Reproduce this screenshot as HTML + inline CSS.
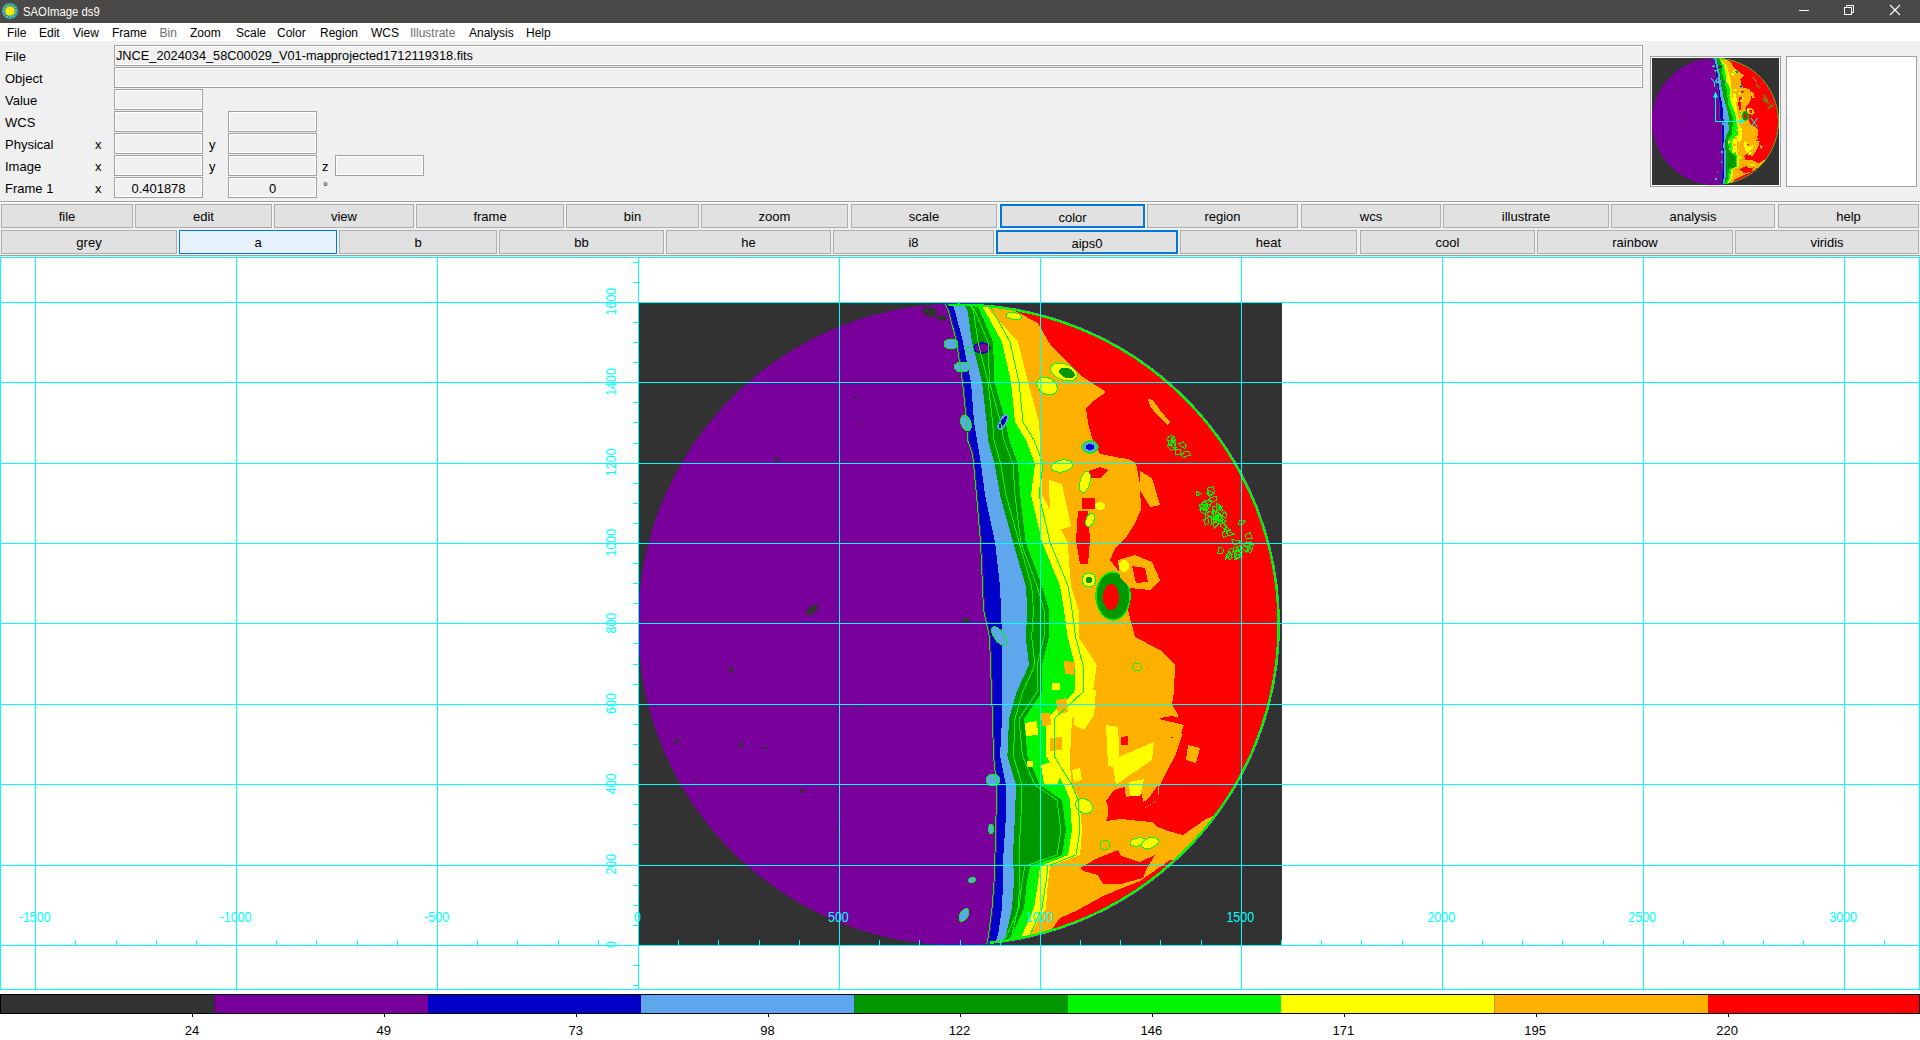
<!DOCTYPE html><html><head><meta charset="utf-8"><style>
html,body{margin:0;padding:0;width:1920px;height:1040px;overflow:hidden;background:#fff;font-family:"Liberation Sans",sans-serif;}
.a{position:absolute;}
.t{position:absolute;white-space:nowrap;color:#000;font-size:13px;line-height:15px;}
.m{position:absolute;white-space:nowrap;color:#000;font-size:12px;line-height:14px;}
.e{position:absolute;box-sizing:border-box;border:1px solid #a0a0a0;background:#f0f0f0;box-shadow:inset 0 0 0 1px #fff;}
.b{position:absolute;box-sizing:border-box;border:1px solid #adadad;background:#e1e1e1;text-align:center;font-size:13px;color:#000;}
.b span{position:absolute;left:0;right:0;top:4px;line-height:15px;}
</style></head><body>
<div class="a" style="left:0;top:0;width:1920px;height:23px;background:#4a4947;"></div>
<svg class="a" style="left:0;top:0" width="24" height="23"><circle cx="10" cy="11" r="8" fill="#3fb0b0"/><circle cx="10" cy="11" r="6.6" fill="#9ccc3a"/><line x1="14.20" y1="11.00" x2="17.34" y2="12.95" stroke="#1a86c8" stroke-width="1.3"/><line x1="13.64" y1="13.10" x2="15.38" y2="16.36" stroke="#1a86c8" stroke-width="1.3"/><line x1="12.10" y1="14.64" x2="11.98" y2="18.34" stroke="#1a86c8" stroke-width="1.3"/><line x1="10.00" y1="15.20" x2="8.05" y2="18.34" stroke="#1a86c8" stroke-width="1.3"/><line x1="7.90" y1="14.64" x2="4.64" y2="16.38" stroke="#1a86c8" stroke-width="1.3"/><line x1="6.36" y1="13.10" x2="2.66" y2="12.98" stroke="#1a86c8" stroke-width="1.3"/><line x1="5.80" y1="11.00" x2="2.66" y2="9.05" stroke="#1a86c8" stroke-width="1.3"/><line x1="6.36" y1="8.90" x2="4.62" y2="5.64" stroke="#1a86c8" stroke-width="1.3"/><line x1="7.90" y1="7.36" x2="8.02" y2="3.66" stroke="#1a86c8" stroke-width="1.3"/><line x1="10.00" y1="6.80" x2="11.95" y2="3.66" stroke="#1a86c8" stroke-width="1.3"/><line x1="12.10" y1="7.36" x2="15.36" y2="5.62" stroke="#1a86c8" stroke-width="1.3"/><line x1="13.64" y1="8.90" x2="17.34" y2="9.02" stroke="#1a86c8" stroke-width="1.3"/><circle cx="10" cy="11" r="4.6" fill="#fbe800"/></svg>
<div class="m" style="left:23px;top:5px;color:#fff;font-size:12.5px;transform-origin:0 0;transform:scaleX(0.905);">SAOImage ds9</div>
<svg class="a" style="left:1780px;top:0" width="140" height="23"><line x1="1799" y1="10.5" x2="1809" y2="10.5" stroke="#fff" stroke-width="1" transform="translate(-1780,0)"/><rect x="1844.5" y="7.5" width="7" height="7" fill="none" stroke="#fff" transform="translate(-1780,0)"/><path d="M1846.5 7.5 V5.5 H1853.5 V12.5 H1851.5" fill="none" stroke="#fff" transform="translate(-1780,0)"/><path d="M1890 5 L1900 15 M1900 5 L1890 15" stroke="#fff" stroke-width="1.1" transform="translate(-1780,0)"/></svg>
<div class="a" style="left:0;top:23px;width:1920px;height:18px;background:#fff;"></div>
<div class="m" style="left:7px;top:26px;color:#000">File</div>
<div class="m" style="left:39px;top:26px;color:#000">Edit</div>
<div class="m" style="left:73px;top:26px;color:#000">View</div>
<div class="m" style="left:112px;top:26px;color:#000">Frame</div>
<div class="m" style="left:159.5px;top:26px;color:#6d6d6d">Bin</div>
<div class="m" style="left:190px;top:26px;color:#000">Zoom</div>
<div class="m" style="left:236px;top:26px;color:#000">Scale</div>
<div class="m" style="left:277px;top:26px;color:#000">Color</div>
<div class="m" style="left:320px;top:26px;color:#000">Region</div>
<div class="m" style="left:371px;top:26px;color:#000">WCS</div>
<div class="m" style="left:410px;top:26px;color:#6d6d6d">Illustrate</div>
<div class="m" style="left:469px;top:26px;color:#000">Analysis</div>
<div class="m" style="left:526px;top:26px;color:#000">Help</div>
<div class="a" style="left:0;top:41px;width:1920px;height:160px;background:#f0f0f0;"></div>
<div class="a" style="left:0;top:201px;width:1920px;height:1px;background:#a0a0a0;"></div>
<div class="a" style="left:0;top:202px;width:1920px;height:1px;background:#fdfdfd;"></div>
<div class="a" style="left:0;top:203px;width:1920px;height:52px;background:#f0f0f0;"></div>
<div class="a" style="left:0;top:255px;width:1920px;height:1px;background:#a0a0a0;"></div>
<div class="t" style="left:5px;top:49px">File</div>
<div class="t" style="left:5px;top:71px">Object</div>
<div class="t" style="left:5px;top:93px">Value</div>
<div class="t" style="left:5px;top:115px">WCS</div>
<div class="t" style="left:5px;top:137px">Physical</div>
<div class="t" style="left:5px;top:159px">Image</div>
<div class="t" style="left:5px;top:181px">Frame 1</div>
<div class="e" style="left:114px;top:45px;width:1529px;height:21px;"></div>
<div class="t" style="left:116px;top:48px;font-size:13.4px;transform-origin:0 0;transform:scaleX(0.952)">JNCE_2024034_58C00029_V01-mapprojected1712119318.fits</div>
<div class="e" style="left:114px;top:67px;width:1529px;height:21px;"></div>
<div class="e" style="left:114px;top:89px;width:89px;height:21px;"></div>
<div class="e" style="left:114px;top:111px;width:89px;height:21px;"></div>
<div class="e" style="left:228px;top:111px;width:89px;height:21px;"></div>
<div class="e" style="left:114px;top:133px;width:89px;height:21px;"></div>
<div class="e" style="left:228px;top:133px;width:89px;height:21px;"></div>
<div class="e" style="left:114px;top:155px;width:89px;height:21px;"></div>
<div class="e" style="left:228px;top:155px;width:89px;height:21px;"></div>
<div class="e" style="left:335px;top:155px;width:89px;height:21px;"></div>
<div class="e" style="left:114px;top:177px;width:89px;height:21px;"></div>
<div class="t" style="left:114px;width:89px;text-align:center;top:181px;font-size:13.6px;transform:scaleX(0.955)">0.401878</div>
<div class="e" style="left:228px;top:177px;width:89px;height:21px;"></div>
<div class="t" style="left:228px;width:89px;text-align:center;top:181px;font-size:13.6px;transform:scaleX(0.955)">0</div>
<div class="t" style="left:95px;top:137px">x</div>
<div class="t" style="left:95px;top:159px">x</div>
<div class="t" style="left:95px;top:181px">x</div>
<div class="t" style="left:209px;top:137px">y</div>
<div class="t" style="left:209px;top:159px">y</div>
<div class="t" style="left:322px;top:159px">z</div>
<div class="t" style="left:323px;top:180px;font-size:12px">°</div>
<div class="a" style="left:1650px;top:56px;width:129px;height:129px;border:1px solid #a0a0a0;background:#fff;"></div>
<div class="a" style="left:1786px;top:56px;width:129px;height:129px;border:1px solid #a0a0a0;background:#fff;"></div>
<div class="b" style="left:1px;top:204px;width:132px;height:24px;"><span>file</span></div>
<div class="b" style="left:135px;top:204px;width:137px;height:24px;"><span>edit</span></div>
<div class="b" style="left:274px;top:204px;width:140px;height:24px;"><span>view</span></div>
<div class="b" style="left:416px;top:204px;width:148px;height:24px;"><span>frame</span></div>
<div class="b" style="left:566px;top:204px;width:133px;height:24px;"><span>bin</span></div>
<div class="b" style="left:701px;top:204px;width:147px;height:24px;"><span>zoom</span></div>
<div class="b" style="left:851px;top:204px;width:146px;height:24px;"><span>scale</span></div>
<div class="b" style="left:1000px;top:204px;width:145px;height:24px;border:2px solid #0078d7;"><span>color</span></div>
<div class="b" style="left:1147px;top:204px;width:151px;height:24px;"><span>region</span></div>
<div class="b" style="left:1301px;top:204px;width:140px;height:24px;"><span>wcs</span></div>
<div class="b" style="left:1443px;top:204px;width:166px;height:24px;"><span>illustrate</span></div>
<div class="b" style="left:1611px;top:204px;width:164px;height:24px;"><span>analysis</span></div>
<div class="b" style="left:1778px;top:204px;width:141px;height:24px;"><span>help</span></div>
<div class="b" style="left:1px;top:230px;width:176px;height:24px;"><span>grey</span></div>
<div class="b" style="left:179px;top:230px;width:158px;height:24px;border:1px solid #0078d7;background:#e5f1fb;"><span>a</span></div>
<div class="b" style="left:339px;top:230px;width:158px;height:24px;"><span>b</span></div>
<div class="b" style="left:499px;top:230px;width:165px;height:24px;"><span>bb</span></div>
<div class="b" style="left:666px;top:230px;width:165px;height:24px;"><span>he</span></div>
<div class="b" style="left:833px;top:230px;width:161px;height:24px;"><span>i8</span></div>
<div class="b" style="left:996px;top:230px;width:182px;height:24px;border:2px solid #0078d7;"><span>aips0</span></div>
<div class="b" style="left:1180px;top:230px;width:177px;height:24px;"><span>heat</span></div>
<div class="b" style="left:1360px;top:230px;width:175px;height:24px;"><span>cool</span></div>
<div class="b" style="left:1537px;top:230px;width:196px;height:24px;"><span>rainbow</span></div>
<div class="b" style="left:1735px;top:230px;width:184px;height:24px;"><span>viridis</span></div>
<svg class="a" style="left:0;top:0" width="1920" height="1040">
<defs><clipPath id="imgclip"><rect x="639" y="303" width="643" height="642"/></clipPath></defs>
<rect x="0" y="256" width="1920" height="734" fill="#fff"/>
<g id="planet" shape-rendering="crispEdges"><rect x="639" y="303" width="643" height="642" fill="#323232"/>
<clipPath id="disc"><circle cx="959" cy="624.5" r="321"/></clipPath>
<circle cx="959" cy="624.5" r="321" fill="#79009b"/>
<g clip-path="url(#disc)">
<polygon points="946,303 950,311 958,342 964,382 968,422 969,440 974,454 975,464 978,495 982,542 984,586 985,610 991,637 992,665 993,692 994,719 995,756 998,785 997.5,816 996.5,853 995.5,882 993.5,908 990,935 988,946 1300,946 1300,303" fill="#0000c8"/>
<polygon points="952,303 955,311 963,342 971,382 974,422 977,440 981,464 985,495 995,542 1000,586 1001,610 1002,637 1002,665 1002,692 1002,719 1000,756 1006,785 1006,816 1003.5,853 1003,882 1002,908 998,935 994,946 1300,946 1300,303" fill="#5fa7ec"/>
<polygon points="963,303 967.6,311 972,342 982,382 986.6,422 988,440 994.7,464 1000,495 1013,542 1025.7,586 1027.5,610 1025.7,637 1029,665 1016.6,692 1009,719 1007.4,756 1016,785 1015,816 1013,853 1014,882 1012,908 1006,935 1000,946 1300,946 1300,303" fill="#009800"/>
<polygon points="975,303 980,311 993,342 994.5,382 1005.6,422 1009,440 1018,464 1020,495 1025.7,542 1042,586 1049,610 1049,637 1042,665 1042,692 1024,719 1027.5,756 1040,785 1062,800 1066,830 1062,855 1030,866 1027,882 1024,908 1012,935 1004,946 1300,946 1300,303" fill="#00f600"/>
<polygon points="980,303 985,311 1002,342 1011,382 1015,422 1026,440 1035,464 1031,495 1042,542 1060,586 1064,610 1067.6,637 1075,665 1075,692 1046,719 1046,756 1064,785 1070,800 1072,830 1068,855 1040,866 1038,882 1034,908 1022,935 1012,946 1300,946 1300,303" fill="#ffff00"/>
<polygon points="985,303 990,311 1018,342 1028,382 1039,422 1040,440 1042,464 1042,495 1067.6,542 1071,586 1078.5,610 1078.5,637 1096.8,665 1093,692 1072,719 1070,756 1071,785 1080,800 1082,830 1080,855 1050,866 1048,882 1046,908 1030,935 1020,946 1300,946 1300,303" fill="#ffb100"/>
<polygon points="1000,303 1015,311 1038,323 1051,346 1066,361 1083,377 1106,392 1095,400 1086,408 1088,423 1092,438 1100,454 1115,457 1128,459 1136,463 1140,485 1141,510 1134,525 1127,536 1115,549 1110,560 1130,586 1128,610 1135,637 1160,650 1175,665 1174,692 1172,704 1178,715 1182,735 1176,754 1166,773 1160,785 1156,792 1108,800 1108,816 1095,853 1082,882 1067.6,908 1050,935 1040,946 1300,946 1300,303" fill="#ff0000"/>
<polygon points="1078,511 1088,511 1090,540 1088,564 1080,564 1076,540" fill="#ff0000" />
<polygon points="1082,498 1095,498 1095,509 1082,509" fill="#ff0000" />
<polygon points="1086,472 1100,467 1108,470 1100,478 1088,478" fill="#ff0000" />
<polygon points="1140,471 1152,478 1160,505 1150,507 1140,490" fill="#ffb100" />
<polygon points="1106,821 1121,819 1140,821 1152,822 1158,827 1168,831 1183,835 1206,819 1300,780 1300,946 1036,946 1056,930 1065,908 1079,882 1092,853 1103,830 1103,821" fill="#ffb100" />
<polygon points="1080,868 1098,858 1118,850 1121,856 1140,862 1155,855 1146,870 1143,878 1121,884 1103,884 1098,875 1083,871" fill="#ff0000" />
<polygon points="1040,946 1060,918 1078,910 1103,896 1125,887 1140,881 1170,860 1300,860 1300,946" fill="#ff0000" />
<polygon points="1138,780 1160,780 1158,800 1145,808" fill="#ffb100" />
<polygon points="1049,480 1062,484 1071,526 1060,530 1050,515" fill="#ffff00" />
<polygon points="1106,725 1118,727 1120,768 1108,766" fill="#ffff00" />
<polygon points="1112,760 1140,748 1154,742 1152,760 1130,775 1116,785" fill="#ffff00" />
<polygon points="1129,782 1144,779 1140,796 1130,796" fill="#ffff00" />
<polygon points="1074,690 1096,690 1094,715 1084,730 1074,725" fill="#ffff00" />
<polygon points="1160,718 1172,716 1186,720 1184,732 1172,738 1162,734" fill="#ff0000" />
<polygon points="1121,737 1128,736 1128,745 1121,745" fill="#ff0000" />
<polygon points="1106,801 1114,790 1125,787 1126,801 1140,805 1149,798 1158,785 1158,800 1140,810 1110,812" fill="#ff0000" />
<polygon points="1159,719 1184,725 1180,737 1162,737" fill="#ffb100" />
<polygon points="1188,745 1200,748 1196,763 1186,760" fill="#ffb100" />
<ellipse cx="1113" cy="596" rx="17" ry="24" fill="#009800" stroke="#00f600" stroke-width="1.5"/>
<ellipse cx="1111" cy="597" rx="8" ry="13" fill="#ff0000"/>
<ellipse cx="1090" cy="447" rx="8" ry="6" fill="#5fa7ec" stroke="#00f600" stroke-width="1.5"/>
<ellipse cx="1090" cy="447" rx="4" ry="3" fill="#0000c8"/>
<ellipse cx="1062" cy="466" rx="11" ry="6" fill="#ffff00" stroke="#00f600" stroke-width="1" transform="rotate(-10 1062 466)"/>
<ellipse cx="1085" cy="482" rx="5" ry="11" fill="#ffff00" stroke="#00f600" stroke-width="1" transform="rotate(15 1085 482)"/>
<ellipse cx="1090" cy="520" rx="4" ry="7" fill="#ffff00" stroke="#00f600" stroke-width="1" transform="rotate(20 1090 520)"/>
<ellipse cx="1100" cy="506" rx="5" ry="4" fill="#ffff00"/>
<ellipse cx="1089" cy="580" rx="7" ry="7" fill="#ffff00" stroke="#00f600" stroke-width="1"/>
<ellipse cx="1089" cy="580" rx="3" ry="3" fill="#009800"/>
<ellipse cx="1064" cy="372" rx="14" ry="8" fill="#ffff00" stroke="#00f600" stroke-width="1" transform="rotate(20 1064 372)"/>
<ellipse cx="1067" cy="373" rx="8" ry="5" fill="#009800" transform="rotate(20 1067 373)"/>
<ellipse cx="1047" cy="386" rx="11" ry="8" fill="#ffff00" stroke="#00f600" stroke-width="1" transform="rotate(30 1047 386)"/>
<ellipse cx="1014" cy="316" rx="8" ry="3.5" fill="#ffff00" stroke="#00f600" stroke-width="1" transform="rotate(10 1014 316)"/>
<ellipse cx="1138" cy="842" rx="8" ry="4" fill="#ffff00" stroke="#00f600" stroke-width="1" transform="rotate(-10 1138 842)"/>
<ellipse cx="1150" cy="843" rx="9" ry="5" fill="#ffff00" stroke="#00f600" stroke-width="1" transform="rotate(-20 1150 843)"/>
<ellipse cx="1084" cy="806" rx="9" ry="7" fill="#ffff00" stroke="#00f600" stroke-width="1" transform="rotate(30 1084 806)"/>
<ellipse cx="1105" cy="845" rx="5" ry="5" fill="#ffb100" stroke="#00f600" stroke-width="1"/>
<ellipse cx="1137" cy="667" rx="5" ry="4" fill="#ffb100" stroke="#00f600" stroke-width="1"/>
<polygon points="1118,560 1135,555 1152,562 1160,580 1150,590 1130,588 1120,578" fill="#ffb100" />
<polygon points="1132,566 1145,568 1148,582 1136,583" fill="#ff0000" />
<ellipse cx="1124" cy="566" rx="5" ry="6" fill="#ffff00"/>
<polygon points="1025,723 1037,721 1038,735 1026,736" fill="#ffff00" />
<polygon points="1041,713 1050,713 1051,725 1042,726" fill="#ffb100" />
<polygon points="1050,738 1062,737 1062,750 1050,751" fill="#ffb100" />
<polygon points="1056,700 1066,698 1068,712 1058,714" fill="#ffb100" />
<polygon points="1072,770 1080,768 1082,780 1074,782" fill="#ffff00" />
<polygon points="1064,661 1075,662 1074,675 1065,674" fill="#ffb100" />
<polygon points="1052,683 1060,683 1060,690 1052,690" fill="#ffff00" />
<polygon points="1027,761 1033,761 1033,767 1027,767" fill="#ffff00" />
<polygon points="1041,765 1052,762 1060,770 1058,785 1044,784" fill="#ffff00" />
<ellipse cx="1003" cy="422" rx="3" ry="8" fill="#0000c8" stroke="#5fa7ec" stroke-width="1.5" transform="rotate(30 1003 422)"/>
<ellipse cx="982" cy="348" rx="8" ry="5" fill="#79009b" stroke="#0000c8" stroke-width="1.5"/>
<ellipse cx="951" cy="344" rx="7" ry="5" fill="#5fa7ec" stroke="#00f600" stroke-width="1"/>
<ellipse cx="962" cy="367" rx="8" ry="5" fill="#5fa7ec" stroke="#00f600" stroke-width="1"/>
<ellipse cx="966" cy="423" rx="5" ry="8" fill="#5fa7ec" stroke="#00f600" stroke-width="1" transform="rotate(-20 966 423)"/>
<ellipse cx="999" cy="636" rx="5" ry="11" fill="#5fa7ec" stroke="#00f600" stroke-width="1" transform="rotate(-35 999 636)"/>
<ellipse cx="993" cy="780" rx="7" ry="6" fill="#5fa7ec" stroke="#00f600" stroke-width="1"/>
<ellipse cx="991" cy="829" rx="2.5" ry="5" fill="#5fa7ec" stroke="#00f600" stroke-width="1"/>
<ellipse cx="972" cy="880" rx="3.5" ry="2.5" fill="#5fa7ec" stroke="#00f600" stroke-width="1" transform="rotate(-30 972 880)"/>
<ellipse cx="964" cy="915" rx="4" ry="7" fill="#5fa7ec" stroke="#00f600" stroke-width="1" transform="rotate(30 964 915)"/>
<ellipse cx="970" cy="350" rx="4" ry="3" fill="#5fa7ec" stroke="#00f600" stroke-width="1"/>
<polygon points="1209.6,516.6 1204.8,520.0 1205.9,514.4" fill="none" stroke="#00f600" stroke-width="1"/>
<polygon points="1214.4,522.1 1211.0,525.2 1211.5,517.8" fill="none" stroke="#00f600" stroke-width="1"/>
<polygon points="1227.1,515.1 1225.5,518.3 1222.2,514.9 1224.9,511.6" fill="none" stroke="#00f600" stroke-width="1"/>
<polygon points="1219.6,514.3 1213.9,517.7 1213.7,510.0" fill="none" stroke="#00f600" stroke-width="1"/>
<polygon points="1213.1,513.4 1210.4,517.4 1206.6,514.5 1209.2,511.0" fill="none" stroke="#00f600" stroke-width="1"/>
<polygon points="1209.3,506.5 1206.7,511.5 1203.4,510.0 1201.9,507.4 1204.1,504.9 1209.1,504.6" fill="none" stroke="#00f600" stroke-width="1"/>
<polygon points="1226.5,521.4 1221.8,523.7 1218.6,523.5 1218.3,520.0 1221.7,518.5" fill="none" stroke="#00f600" stroke-width="1"/>
<polygon points="1214.5,493.2 1209.8,496.1 1206.9,493.8 1208.8,490.5" fill="none" stroke="#00f600" stroke-width="1"/>
<polygon points="1227.2,535.1 1226.8,536.2 1223.8,537.5 1222.1,534.0 1222.3,532.3 1226.4,530.9" fill="none" stroke="#00f600" stroke-width="1"/>
<polygon points="1242.5,556.8 1234.8,559.6 1236.4,554.2" fill="none" stroke="#00f600" stroke-width="1"/>
<polygon points="1218.1,517.6 1216.5,521.4 1213.8,519.2 1215.0,516.3" fill="none" stroke="#00f600" stroke-width="1"/>
<polygon points="1209.1,520.0 1208.3,523.2 1205.5,525.2 1203.3,519.4 1205.3,518.8 1207.1,517.8" fill="none" stroke="#00f600" stroke-width="1"/>
<polygon points="1222.4,506.6 1216.0,511.4 1216.8,503.5" fill="none" stroke="#00f600" stroke-width="1"/>
<polygon points="1220.1,509.4 1216.5,511.7 1212.5,511.3 1212.6,506.7 1217.6,505.6" fill="none" stroke="#00f600" stroke-width="1"/>
<polygon points="1208.1,504.4 1203.8,510.1 1201.4,504.4 1203.8,501.5" fill="none" stroke="#00f600" stroke-width="1"/>
<polygon points="1222.8,519.2 1221.3,520.4 1218.2,520.1 1216.4,514.9 1221.8,515.2" fill="none" stroke="#00f600" stroke-width="1"/>
<polygon points="1234.1,534.4 1227.7,535.6 1226.9,529.9" fill="none" stroke="#00f600" stroke-width="1"/>
<polygon points="1223.6,519.4 1221.3,521.1 1217.7,520.8 1216.0,519.3 1217.9,516.0 1221.3,516.7" fill="none" stroke="#00f600" stroke-width="1"/>
<polygon points="1232.3,554.4 1225.6,559.1 1227.2,553.0" fill="none" stroke="#00f600" stroke-width="1"/>
<polygon points="1241.0,548.0 1237.9,551.8 1233.9,551.3 1233.6,547.7 1240.0,545.6" fill="none" stroke="#00f600" stroke-width="1"/>
<polygon points="1233.8,550.6 1231.4,553.6 1228.3,551.1 1230.8,548.1" fill="none" stroke="#00f600" stroke-width="1"/>
<polygon points="1226.2,525.8 1224.1,529.3 1220.6,525.9 1220.7,524.4 1222.7,521.9" fill="none" stroke="#00f600" stroke-width="1"/>
<polygon points="1214.5,491.3 1212.2,494.8 1208.2,493.2 1207.1,488.2 1213.1,486.8" fill="none" stroke="#00f600" stroke-width="1"/>
<polygon points="1232.1,557.3 1230.8,559.8 1227.2,557.6 1228.4,552.9" fill="none" stroke="#00f600" stroke-width="1"/>
<polygon points="1240.5,541.1 1235.9,545.1 1232.9,543.3 1232.0,539.5 1237.4,540.3" fill="none" stroke="#00f600" stroke-width="1"/>
<polygon points="1219.8,520.2 1217.8,523.5 1213.4,520.6 1217.2,516.9" fill="none" stroke="#00f600" stroke-width="1"/>
<polygon points="1223.2,510.2 1221.4,511.4 1218.3,508.7 1220.1,506.2" fill="none" stroke="#00f600" stroke-width="1"/>
<polygon points="1242.4,552.0 1238.8,554.9 1234.5,552.7 1237.6,547.4" fill="none" stroke="#00f600" stroke-width="1"/>
<polygon points="1207.5,505.8 1206.0,510.9 1200.8,509.2 1199.4,504.3 1203.5,504.9" fill="none" stroke="#00f600" stroke-width="1"/>
<polygon points="1218.2,524.3 1214.4,528.4 1213.1,524.7 1215.5,520.8" fill="none" stroke="#00f600" stroke-width="1"/>
<polygon points="1221.3,514.0 1216.0,517.7 1214.9,511.5" fill="none" stroke="#00f600" stroke-width="1"/>
<polygon points="1216.9,499.7 1212.7,502.4 1211.5,502.1 1207.7,500.6 1211.4,497.2 1216.2,496.5" fill="none" stroke="#00f600" stroke-width="1"/>
<polygon points="1224.0,550.1 1222.4,553.3 1217.9,553.1 1218.8,547.6 1221.7,547.7" fill="none" stroke="#00f600" stroke-width="1"/>
<polygon points="1206.3,511.1 1205.4,514.1 1200.8,512.0 1199.9,509.1 1204.0,506.4" fill="none" stroke="#00f600" stroke-width="1"/>
<polygon points="1212.1,502.6 1210.5,505.1 1207.0,504.8 1205.1,500.6 1211.1,500.0" fill="none" stroke="#00f600" stroke-width="1"/>
<polygon points="1241.0,554.3 1239.4,557.1 1234.8,557.2 1235.1,551.1 1238.6,549.7" fill="none" stroke="#00f600" stroke-width="1"/>
<polygon points="1230.7,530.1 1224.1,531.9 1226.1,526.6" fill="none" stroke="#00f600" stroke-width="1"/>
<polygon points="1200.8,493.5 1197.1,495.9 1196.1,491.4" fill="none" stroke="#00f600" stroke-width="1"/>
<polygon points="1175.7,439.9 1171.7,441.7 1171.4,437.8" fill="none" stroke="#00f600" stroke-width="1"/>
<polygon points="1181.1,451.3 1180.1,454.8 1175.4,454.2 1175.8,451.1 1176.0,449.4 1179.9,449.1" fill="none" stroke="#00f600" stroke-width="1"/>
<polygon points="1175.8,445.9 1175.4,448.0 1171.1,446.3 1170.1,442.6 1176.0,442.3" fill="none" stroke="#00f600" stroke-width="1"/>
<polygon points="1175.0,442.3 1170.3,445.8 1168.7,444.4 1169.1,440.3 1171.4,440.2" fill="none" stroke="#00f600" stroke-width="1"/>
<polygon points="1186.3,445.8 1184.8,448.6 1180.7,445.8 1179.0,443.8 1183.2,441.8" fill="none" stroke="#00f600" stroke-width="1"/>
<polygon points="1174.5,437.0 1170.7,441.0 1166.6,439.8 1168.9,436.3 1171.2,435.5" fill="none" stroke="#00f600" stroke-width="1"/>
<polygon points="1190.3,455.2 1187.3,455.9 1183.5,457.4 1181.2,455.6 1184.3,451.8 1188.8,451.1" fill="none" stroke="#00f600" stroke-width="1"/>
<polygon points="1176.3,447.6 1173.6,449.7 1171.0,450.1 1167.5,446.2 1170.6,443.4 1172.5,441.3" fill="none" stroke="#00f600" stroke-width="1"/>
<polygon points="1245.2,521.3 1241.7,525.2 1238.7,524.6 1239.3,520.5 1242.0,520.1" fill="none" stroke="#00f600" stroke-width="1"/>
<polygon points="1252.2,538.3 1248.8,538.8 1246.9,538.9 1245.2,537.0 1245.6,534.7 1250.1,532.8" fill="none" stroke="#00f600" stroke-width="1"/>
<polygon points="1249.8,545.1 1247.8,548.1 1244.6,544.5 1246.8,541.5" fill="none" stroke="#00f600" stroke-width="1"/>
<polygon points="1250.3,548.6 1246.5,551.9 1241.6,547.8 1245.4,545.9" fill="none" stroke="#00f600" stroke-width="1"/>
<polygon points="1253.0,546.9 1250.9,552.5 1246.5,551.5 1247.8,548.6 1247.5,545.6 1253.1,544.3" fill="none" stroke="#00f600" stroke-width="1"/>
<polygon points="1252.5,544.4 1250.3,547.2 1247.2,547.5 1243.6,544.9 1246.9,542.5 1250.4,541.9" fill="none" stroke="#00f600" stroke-width="1"/>
<polygon points="1148,399 1153,400 1160,410 1170,422 1167,425 1156,414 1150,406" fill="#ffb100" />
<ellipse cx="812" cy="610" rx="7" ry="4" fill="#323232" transform="rotate(-40 812 610)"/>
<ellipse cx="777" cy="459" rx="2.5" ry="2" fill="#323232"/>
<ellipse cx="855" cy="397" rx="2" ry="1.5" fill="#323232"/>
<ellipse cx="731" cy="670" rx="2" ry="3" fill="#323232"/>
<ellipse cx="677" cy="741" rx="2" ry="2" fill="#323232"/>
<ellipse cx="741" cy="745" rx="2" ry="2" fill="#323232"/>
<ellipse cx="766" cy="748" rx="2" ry="1.5" fill="#323232"/>
<ellipse cx="802" cy="791" rx="2" ry="2" fill="#323232"/>
<ellipse cx="859" cy="706" rx="2" ry="1.5" fill="#323232"/>
<ellipse cx="930" cy="312" rx="8" ry="5" fill="#323232" transform="rotate(20 930 312)"/>
<ellipse cx="942" cy="318" rx="4" ry="3" fill="#323232"/>
<ellipse cx="966" cy="620" rx="4" ry="2" fill="#323232"/>
<ellipse cx="862" cy="422" rx="1.5" ry="1.5" fill="#323232"/>
<ellipse cx="695" cy="780" rx="1.5" ry="1.5" fill="#323232"/>
<ellipse cx="837" cy="830" rx="1.5" ry="1.5" fill="#323232"/>
</g>
<g clip-path="url(#disc)">
<polyline points="944.5,303 948.5,311 956.5,342 962.5,382 966.5,422 967.5,440 972.5,454 973.5,464 976.5,495 980.5,542 982.5,586 983.5,610 989.5,637 990.5,665 991.5,692 992.5,719 993.5,756 996.5,785 996.0,816 995.0,853 994.0,882 992.0,908 988.5,935 986.5,946" fill="none" stroke="#00f600" stroke-width="1"/>
<polyline points="969,303 973.6,311 978,342 988,382 992.6,422 994,440 1000.7,464 1006,495 1019,542 1031.7,586 1033.5,610 1031.7,637 1035,665 1022.6,692 1015,719 1013.4,756 1022,785 1021,816 1019,853 1020,882 1018,908 1012,935 1006,946" fill="none" stroke="#00f600" stroke-width="1"/>
<polyline points="970,303 975,311 988,342 989.5,382 1000.6,422 1004,440 1013,464 1015,495 1020.7,542 1037,586 1044,610 1044,637 1037,665 1037,692 1019,719 1022.5,756 1035,785 1057,800 1061,830 1057,855 1025,866 1022,882 1019,908 1007,935 999,946" fill="none" stroke="#00f600" stroke-width="1"/>
<polyline points="988,303 993,311 1010,342 1019,382 1023,422 1034,440 1043,464 1039,495 1050,542 1068,586 1072,610 1075.6,637 1083,665 1083,692 1054,719 1054,756 1072,785 1078,800 1080,830 1076,855 1048,866 1046,882 1042,908 1030,935 1020,946" fill="none" stroke="#00f600" stroke-width="1"/>
</g>
<clipPath id="rimclip"><polygon points="947,303 951,311 959,342 965,382 969,422 970,440 975,454 976,464 979,495 983,542 985,586 986,610 992,637 993,665 994,692 995,719 996,756 999,785 998.5,816 997.5,853 996.5,882 994.5,908 991,935 989,946 1290,946 1290,303"/></clipPath>
<g clip-path="url(#imgclip)"><g clip-path="url(#rimclip)"><circle cx="959" cy="624.5" r="321.3" fill="none" stroke="#79009b" stroke-width="1.2"/><circle cx="959" cy="624.5" r="319.7" fill="none" stroke="#00f600" stroke-width="2.6"/></g></g></g>
<path d="M35.5 257V990 M236.5 257V990 M437.5 257V990 M638.5 257V990 M839.5 257V990 M1040.5 257V990 M1241.5 257V990 M1442.5 257V990 M1643.5 257V990 M1844.5 257V990 M0 945.5H1920 M0 865.5H1920 M0 784.5H1920 M0 704.5H1920 M0 623.5H1920 M0 543.5H1920 M0 463.5H1920 M0 382.5H1920 M0 302.5H1920 M0 257.5H1920 M0.5 257V990 M1919.5 257V990 M0 989.5H1920 M35.5 940V945 M75.5 940V945 M116.5 940V945 M156.5 940V945 M196.5 940V945 M236.5 940V945 M276.5 940V945 M316.5 940V945 M357.5 940V945 M397.5 940V945 M437.5 940V945 M477.5 940V945 M517.5 940V945 M558.5 940V945 M598.5 940V945 M638.5 940V945 M678.5 940V945 M718.5 940V945 M759.5 940V945 M799.5 940V945 M839.5 940V945 M879.5 940V945 M919.5 940V945 M960.5 940V945 M1000.5 940V945 M1040.5 940V945 M1080.5 940V945 M1120.5 940V945 M1160.5 940V945 M1201.5 940V945 M1241.5 940V945 M1281.5 940V945 M1321.5 940V945 M1361.5 940V945 M1402.5 940V945 M1442.5 940V945 M1482.5 940V945 M1522.5 940V945 M1562.5 940V945 M1603.5 940V945 M1643.5 940V945 M1683.5 940V945 M1723.5 940V945 M1763.5 940V945 M1803.5 940V945 M1844.5 940V945 M1884.5 940V945 M633 985.5H638 M633 965.5H638 M633 945.5H638 M633 925.5H638 M633 905.5H638 M633 885.5H638 M633 865.5H638 M633 844.5H638 M633 824.5H638 M633 804.5H638 M633 784.5H638 M633 764.5H638 M633 744.5H638 M633 724.5H638 M633 704.5H638 M633 684.5H638 M633 664.5H638 M633 643.5H638 M633 623.5H638 M633 603.5H638 M633 583.5H638 M633 563.5H638 M633 543.5H638 M633 523.5H638 M633 503.5H638 M633 483.5H638 M633 463.5H638 M633 443.5H638 M633 422.5H638 M633 402.5H638 M633 382.5H638 M633 362.5H638 M633 342.5H638 M633 322.5H638 M633 302.5H638 M633 282.5H638 M633 262.5H638" stroke="#00ffff" stroke-width="1" fill="none" shape-rendering="crispEdges"/>
<text x="34.7" y="922" fill="#00ffff" font-size="14" text-anchor="middle" font-family="Liberation Sans" transform="translate(34.7,0) scale(0.89,1) translate(-34.7,0)">-1500</text>
<text x="235.6" y="922" fill="#00ffff" font-size="14" text-anchor="middle" font-family="Liberation Sans" transform="translate(235.6,0) scale(0.89,1) translate(-235.6,0)">-1000</text>
<text x="436.6" y="922" fill="#00ffff" font-size="14" text-anchor="middle" font-family="Liberation Sans" transform="translate(436.6,0) scale(0.89,1) translate(-436.6,0)">-500</text>
<text x="637.5" y="922" fill="#00ffff" font-size="14" text-anchor="middle" font-family="Liberation Sans" transform="translate(637.5,0) scale(0.89,1) translate(-637.5,0)">0</text>
<text x="838.4" y="922" fill="#00ffff" font-size="14" text-anchor="middle" font-family="Liberation Sans" transform="translate(838.4,0) scale(0.89,1) translate(-838.4,0)">500</text>
<text x="1039.4" y="922" fill="#00ffff" font-size="14" text-anchor="middle" font-family="Liberation Sans" transform="translate(1039.4,0) scale(0.89,1) translate(-1039.4,0)">1000</text>
<text x="1240.3" y="922" fill="#00ffff" font-size="14" text-anchor="middle" font-family="Liberation Sans" transform="translate(1240.3,0) scale(0.89,1) translate(-1240.3,0)">1500</text>
<text x="1441.3" y="922" fill="#00ffff" font-size="14" text-anchor="middle" font-family="Liberation Sans" transform="translate(1441.3,0) scale(0.89,1) translate(-1441.3,0)">2000</text>
<text x="1642.2" y="922" fill="#00ffff" font-size="14" text-anchor="middle" font-family="Liberation Sans" transform="translate(1642.2,0) scale(0.89,1) translate(-1642.2,0)">2500</text>
<text x="1843.1" y="922" fill="#00ffff" font-size="14" text-anchor="middle" font-family="Liberation Sans" transform="translate(1843.1,0) scale(0.89,1) translate(-1843.1,0)">3000</text>
<text x="0" y="0" fill="#00ffff" font-size="14" text-anchor="middle" font-family="Liberation Sans" transform="translate(616,944.6) rotate(-90) scale(0.89,1)">0</text>
<text x="0" y="0" fill="#00ffff" font-size="14" text-anchor="middle" font-family="Liberation Sans" transform="translate(616,864.2) rotate(-90) scale(0.89,1)">200</text>
<text x="0" y="0" fill="#00ffff" font-size="14" text-anchor="middle" font-family="Liberation Sans" transform="translate(616,783.8) rotate(-90) scale(0.89,1)">400</text>
<text x="0" y="0" fill="#00ffff" font-size="14" text-anchor="middle" font-family="Liberation Sans" transform="translate(616,703.5) rotate(-90) scale(0.89,1)">600</text>
<text x="0" y="0" fill="#00ffff" font-size="14" text-anchor="middle" font-family="Liberation Sans" transform="translate(616,623.1) rotate(-90) scale(0.89,1)">800</text>
<text x="0" y="0" fill="#00ffff" font-size="14" text-anchor="middle" font-family="Liberation Sans" transform="translate(616,542.7) rotate(-90) scale(0.89,1)">1000</text>
<text x="0" y="0" fill="#00ffff" font-size="14" text-anchor="middle" font-family="Liberation Sans" transform="translate(616,462.3) rotate(-90) scale(0.89,1)">1200</text>
<text x="0" y="0" fill="#00ffff" font-size="14" text-anchor="middle" font-family="Liberation Sans" transform="translate(616,382.0) rotate(-90) scale(0.89,1)">1400</text>
<text x="0" y="0" fill="#00ffff" font-size="14" text-anchor="middle" font-family="Liberation Sans" transform="translate(616,301.6) rotate(-90) scale(0.89,1)">1600</text>
<rect x="0" y="994" width="1920" height="20" fill="#000"/>
<rect x="1" y="995" width="213.5" height="18" fill="#323232"/>
<rect x="214.5" y="995" width="213.5" height="18" fill="#79009b"/>
<rect x="428" y="995" width="213" height="18" fill="#0000c8"/>
<rect x="641" y="995" width="213.5" height="18" fill="#5fa7ec"/>
<rect x="854.5" y="995" width="213.5" height="18" fill="#009800"/>
<rect x="1068" y="995" width="213" height="18" fill="#00f600"/>
<rect x="1281" y="995" width="213.5" height="18" fill="#ffff00"/>
<rect x="1494.5" y="995" width="213.5" height="18" fill="#ffb100"/>
<rect x="1708" y="995" width="211" height="18" fill="#ff0000"/>
<line x1="192.5" y1="1014" x2="192.5" y2="1017" stroke="#000" shape-rendering="crispEdges"/>
<text x="191.9" y="1035" font-size="13" text-anchor="middle" font-family="Liberation Sans" fill="#000">24</text>
<line x1="384.5" y1="1014" x2="384.5" y2="1017" stroke="#000" shape-rendering="crispEdges"/>
<text x="383.8" y="1035" font-size="13" text-anchor="middle" font-family="Liberation Sans" fill="#000">49</text>
<line x1="576.5" y1="1014" x2="576.5" y2="1017" stroke="#000" shape-rendering="crispEdges"/>
<text x="575.7" y="1035" font-size="13" text-anchor="middle" font-family="Liberation Sans" fill="#000">73</text>
<line x1="768.5" y1="1014" x2="768.5" y2="1017" stroke="#000" shape-rendering="crispEdges"/>
<text x="767.6" y="1035" font-size="13" text-anchor="middle" font-family="Liberation Sans" fill="#000">98</text>
<line x1="960.5" y1="1014" x2="960.5" y2="1017" stroke="#000" shape-rendering="crispEdges"/>
<text x="959.5" y="1035" font-size="13" text-anchor="middle" font-family="Liberation Sans" fill="#000">122</text>
<line x1="1152.5" y1="1014" x2="1152.5" y2="1017" stroke="#000" shape-rendering="crispEdges"/>
<text x="1151.4" y="1035" font-size="13" text-anchor="middle" font-family="Liberation Sans" fill="#000">146</text>
<line x1="1344.5" y1="1014" x2="1344.5" y2="1017" stroke="#000" shape-rendering="crispEdges"/>
<text x="1343.3" y="1035" font-size="13" text-anchor="middle" font-family="Liberation Sans" fill="#000">171</text>
<line x1="1536.5" y1="1014" x2="1536.5" y2="1017" stroke="#000" shape-rendering="crispEdges"/>
<text x="1535.2" y="1035" font-size="13" text-anchor="middle" font-family="Liberation Sans" fill="#000">195</text>
<line x1="1728.5" y1="1014" x2="1728.5" y2="1017" stroke="#000" shape-rendering="crispEdges"/>
<text x="1727.1" y="1035" font-size="13" text-anchor="middle" font-family="Liberation Sans" fill="#000">220</text>
</svg>
<svg class="a" style="left:1652px;top:58px" width="127" height="127">
<g transform="scale(0.19751166407465007) translate(-639,-303)"><use href="#planet"/></g>
<g transform="translate(-1652,-58)" stroke="#00ffff" fill="none" stroke-width="1"><path d="M1715.5 121.5 V94 M1715.5 121.5 H1742" shape-rendering="crispEdges"/><path d="M1713 97.5 L1715.5 91.5 L1718 97.5 Z M1739.5 119 L1745.5 121.5 L1739.5 124 Z" fill="#00ffff" stroke="none"/><path d="M1711 78 L1714.5 82.5 L1718 78 M1714.5 82.5 V86.5" stroke-width="1"/><path d="M1751 118 L1757.5 127 M1757.5 118 L1751 127" stroke-width="1"/></g>
</svg>
</body></html>
